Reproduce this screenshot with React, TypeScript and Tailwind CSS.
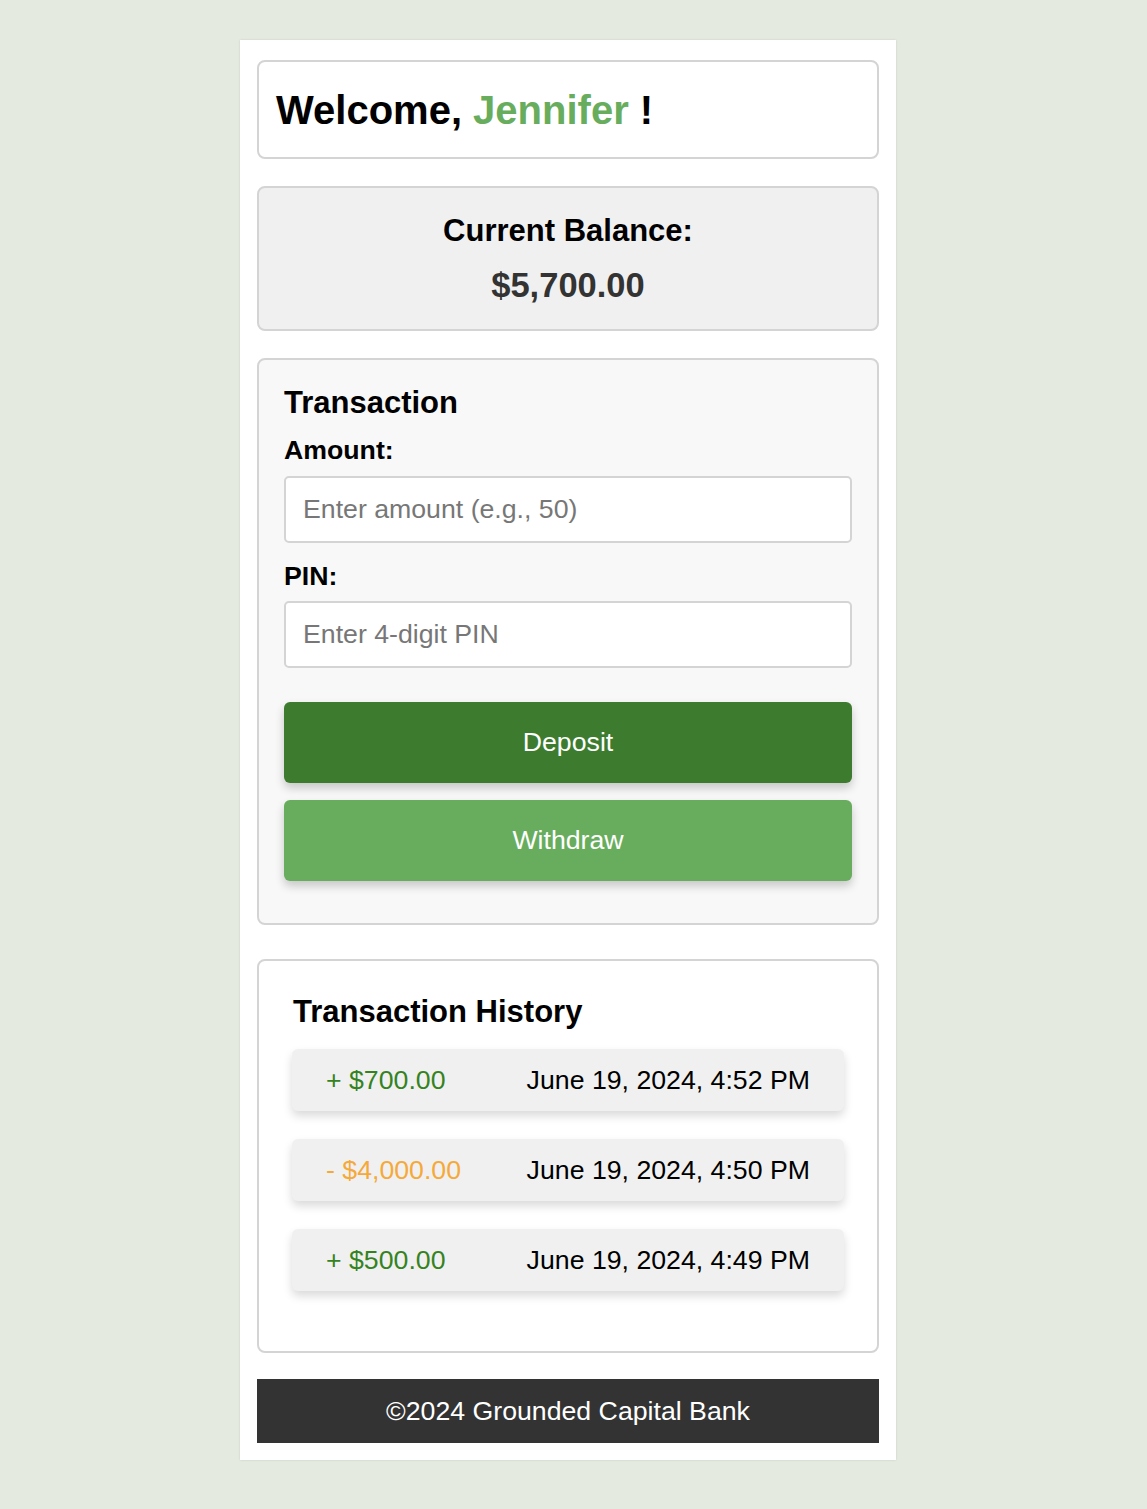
import { useState } from "react";

const HISTORY = [
  { sign: "+", amount: "$700.00", date: "June 19, 2024, 4:52 PM", type: "deposit" },
  { sign: "-", amount: "$4,000.00", date: "June 19, 2024, 4:50 PM", type: "withdraw" },
  { sign: "+", amount: "$500.00", date: "June 19, 2024, 4:49 PM", type: "deposit" },
] as const;

export default function App() {
  const [amount, setAmount] = useState("");
  const [pin, setPin] = useState("");

  return (
    <div
      className="min-h-[1509px] bg-[#e4eadf] pt-[40px] pb-[50px] text-[26.7px] text-black"
      style={{ fontFamily: '"Liberation Sans", Arial, Helvetica, sans-serif' }}
    >
      <div className="ml-[240px] flex w-[656px] flex-col bg-white px-[17px] pt-[20px] pb-[17px] shadow-[0_0_2px_rgba(0,0,0,0.12)]">
        {/* Welcome */}
        <div className="flex h-[99px] items-center rounded-[8px] border-2 border-[#d4d4d4] px-[17px]">
          <h1 className="text-[40px] font-bold leading-none">
            Welcome, <span className="text-[#68ad5d]">Jennifer</span> !
          </h1>
        </div>

        {/* Balance */}
        <div className="mt-[27px] flex h-[145px] flex-col items-center rounded-[8px] border-2 border-[#d4d4d4] bg-[#f0f0f0] pt-[25px]">
          <h3 className="text-[31px] font-bold leading-[36px]">Current Balance:</h3>
          <p className="mt-[16px] text-[34.5px] font-bold leading-[40px] text-[#333333]">$5,700.00</p>
        </div>

        {/* Transaction */}
        <div className="mt-[27px] flex flex-col rounded-[8px] border-2 border-[#d4d4d4] bg-[#f8f8f8] px-[25px] pt-[25px] pb-[42px]">
          <h3 className="text-[31px] font-bold leading-[36px]">Transaction</h3>
          <label className="mt-[14px] text-[26.7px] font-bold leading-[30px]">Amount:</label>
          <input
            value={amount}
            onChange={(e) => setAmount(e.target.value)}
            placeholder="Enter amount (e.g., 50)"
            className="mt-[11px] h-[67px] w-full rounded-[5px] border-2 border-[#d4d4d4] bg-white px-[17px] text-[26.7px] outline-none placeholder:text-[#777777]"
          />
          <label className="mt-[18px] text-[26.7px] font-bold leading-[30px]">PIN:</label>
          <input
            type="password"
            value={pin}
            onChange={(e) => setPin(e.target.value)}
            placeholder="Enter 4-digit PIN"
            className="mt-[10px] h-[67px] w-full rounded-[5px] border-2 border-[#d4d4d4] bg-white px-[17px] text-[26.7px] outline-none placeholder:text-[#777777]"
          />
          <button className="mt-[34px] h-[81px] w-full rounded-[6px] bg-[#3d7c2f] text-[26.7px] text-white shadow-[0_5px_10px_rgba(0,0,0,0.2)]">
            Deposit
          </button>
          <button className="mt-[17px] h-[81px] w-full rounded-[6px] bg-[#68ad5d] text-[26.7px] text-white shadow-[0_5px_10px_rgba(0,0,0,0.2)]">
            Withdraw
          </button>
        </div>

        {/* History */}
        <div className="mt-[34px] flex flex-col rounded-[8px] border-2 border-[#d4d4d4] bg-white px-[33px] pt-[33px] pb-[60px]">
          <h3 className="ml-[1px] text-[31px] font-bold leading-[36px]">Transaction History</h3>
          <ul className="mt-[19px] flex flex-col gap-[28px]">
            {HISTORY.map((t) => (
              <li
                key={t.date}
                className="flex h-[62px] items-center justify-between rounded-[6px] bg-[#f0f0f0] px-[34px] shadow-[0_5px_10px_rgba(0,0,0,0.15)]"
              >
                <span className={t.type === "deposit" ? "text-[#34831f]" : "text-[#f5a93a]"}>
                  {t.sign} {t.amount}
                </span>
                <span>{t.date}</span>
              </li>
            ))}
          </ul>
        </div>

        {/* Footer */}
        <footer className="mt-[26px] flex h-[64px] items-center justify-center bg-[#333333] text-[26.7px] text-white">
          ©2024 Grounded Capital Bank
        </footer>
      </div>
    </div>
  );
}
